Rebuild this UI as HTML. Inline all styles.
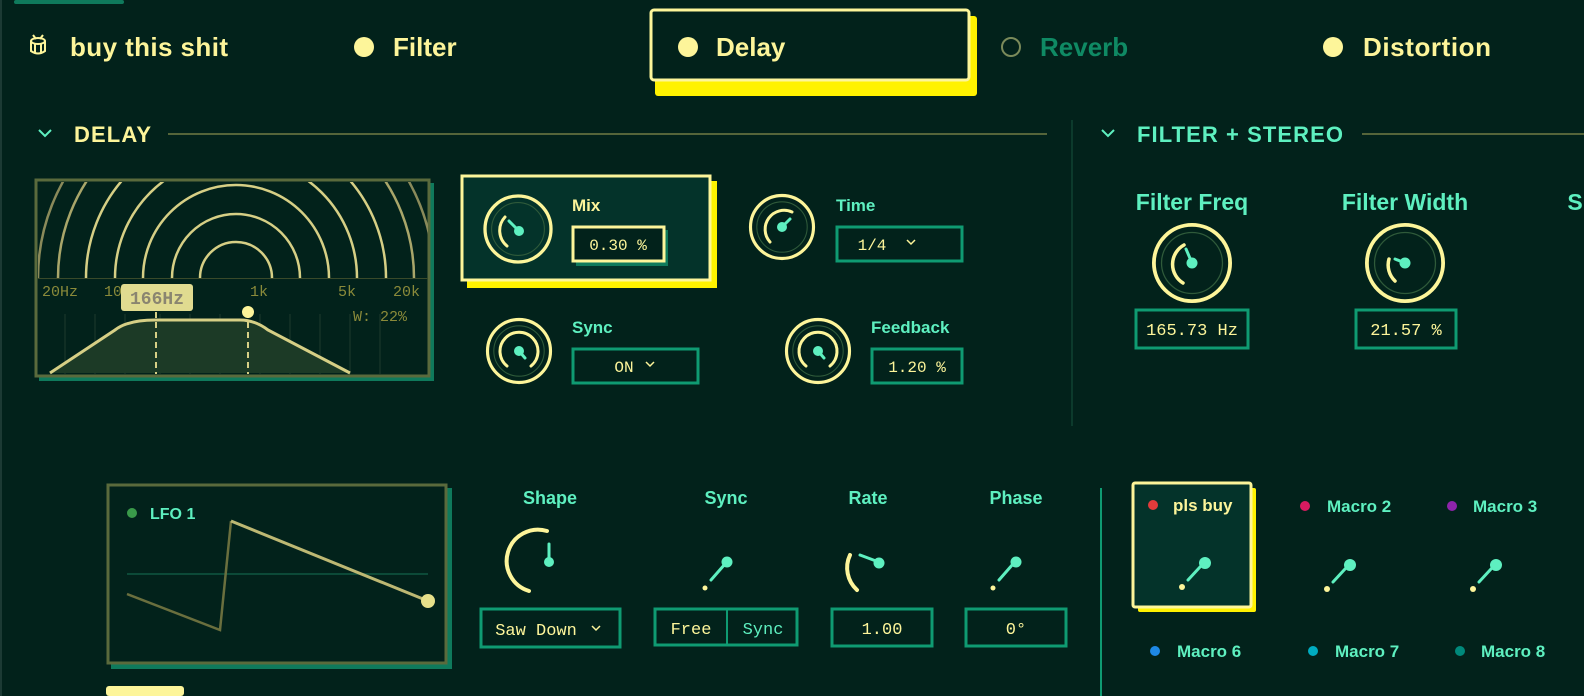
<!DOCTYPE html>
<html><head><meta charset="utf-8"><style>
html,body{margin:0;padding:0;background:#02221b;width:1584px;height:696px;overflow:hidden}
svg{display:block}
.s{font-family:"Liberation Sans",sans-serif;font-weight:bold}
.m{font-family:"Liberation Mono",monospace}
</style></head><body>
<svg width="1584" height="696" viewBox="0 0 1584 696" xmlns="http://www.w3.org/2000/svg">
<rect width="1584" height="696" fill="#02221b"/>
<rect x="0" y="0" width="2" height="696" fill="#1c3a34"/>
<rect x="14" y="0" width="110" height="4" rx="2" fill="#0f7a5c"/>
<g fill="none" stroke="#fdf59a" stroke-width="2">
<ellipse cx="38" cy="41" rx="7" ry="3"/><path d="M31 41v10q7 5 14 0V41M35 44v9M41 44v9M33 35l3 4M43 35l-3 4"/>
</g>
<g class="s" font-size="26" fill="#fdf59a">
<text x="70" y="56" textLength="158">buy this shit</text>
<circle cx="364" cy="47" r="10"/><text x="393" y="56">Filter</text>
<rect x="655" y="16" width="322" height="80" rx="3" fill="#fff200"/>
<rect x="651" y="10" width="318" height="70" rx="3" fill="#02221b" stroke="#fdf59a" stroke-width="3"/>
<circle cx="688" cy="47" r="10"/><text x="716" y="56">Delay</text>
<circle cx="1011" cy="47" r="9" fill="none" stroke="#7a8a5a" stroke-width="2"/><text x="1040" y="56" fill="#0f8a64">Reverb</text>
<circle cx="1333" cy="47" r="10"/><text x="1363" y="56" textLength="128">Distortion</text>
</g>
<path d="M39 130l6 6 6-6" fill="none" stroke="#5ef0c0" stroke-width="2"/>
<text x="74" y="142" class="s" font-size="22" fill="#fdf59a" textLength="77">DELAY</text>
<rect x="168" y="133" width="879" height="2" fill="#55653a"/>
<rect x="1071" y="120" width="2" height="306" fill="#0c3a2c"/>
<path d="M1102 130l6 6 6-6" fill="none" stroke="#5ef0c0" stroke-width="2"/>
<text x="1137" y="142" class="s" font-size="22" fill="#5ef0c0" textLength="206">FILTER + STEREO</text>
<rect x="1362" y="133" width="222" height="2" fill="#55653a"/>
<rect x="39" y="183" width="395" height="198" fill="#0f7a5c"/>
<rect x="36" y="180" width="393" height="196" fill="#02221b" stroke="#5a6a3c" stroke-width="3"/>
<clipPath id="c1"><rect x="38" y="182" width="390" height="96"/></clipPath>
<g clip-path="url(#c1)" fill="none" stroke="#d6cf85" stroke-width="2.5">
<circle cx="236" cy="278" r="36"/><circle cx="236" cy="278" r="64"/><circle cx="236" cy="278" r="93"/><circle cx="236" cy="278" r="121"/><circle cx="236" cy="278" r="150"/><circle cx="236" cy="278" r="178" stroke="#a9a66a"/><circle cx="236" cy="278" r="198" stroke="#8a8a5a"/>
</g>
<rect x="38" y="278" width="390" height="1" fill="#3a4a2a"/>
<g stroke="#1f3a2c" stroke-width="1"><path d="M65 314v60M95 314v60M125 314v60M160 314v60M190 314v60M220 314v60M260 314v60M290 314v60M320 314v60M350 314v60M380 314v60"/></g>
<path d="M50 373L115 330Q128 320 155 320L240 320Q255 320 268 330L350 373Z" fill="#1c3a26"/>
<path d="M50 373L115 330Q128 320 155 320L240 320Q255 320 268 330L350 373" fill="none" stroke="#d6cf85" stroke-width="3"/>
<path d="M156 312v62M248 312v62" stroke="#d6cf85" stroke-width="2" stroke-dasharray="6 4"/>
<circle cx="248" cy="312" r="6" fill="#fdf59a"/>
<g class="m" font-size="15" fill="#8a8a3a"><text x="42" y="296">20Hz</text><text x="104" y="296">10</text><text x="250" y="296">1k</text><text x="338" y="296">5k</text><text x="393" y="296">20k</text><text x="353" y="321">W: 22%</text></g>
<rect x="121" y="284" width="72" height="27" rx="3" fill="#e0db90"/>
<text x="157" y="304" text-anchor="middle" class="m" font-size="18" font-weight="bold" fill="#8a8570">166Hz</text>
<rect x="467" y="181" width="250" height="107" fill="#fff200"/>
<rect x="462" y="176" width="248" height="104" fill="#04332a" stroke="#fdf59a" stroke-width="3"/>
<defs>
<g id="kn"><circle r="30" fill="none" stroke="#fdf59a" stroke-width="3"/><circle r="24" fill="none" stroke="#2f5a3a" stroke-width="1"/></g>
</defs>
<g transform="translate(518,229)"><use href="#kn" transform="scale(1.1)"/><path d="M-11 17A20 20 0 0 1-13-12" fill="none" stroke="#fdf59a" stroke-width="3" stroke-linecap="round"/><path d="M-9-8L1 2" stroke="#5ef0c0" stroke-width="3" stroke-linecap="round"/><circle cx="1" cy="2" r="5" fill="#5ef0c0"/></g>
<g transform="translate(782,227)"><use href="#kn" transform="scale(1.05)"/><path d="M-12 15A19 19 0 0 1 10-15" fill="none" stroke="#fdf59a" stroke-width="3" stroke-linecap="round"/><path d="M0 0L8-8" stroke="#5ef0c0" stroke-width="3" stroke-linecap="round"/><circle r="5" fill="#5ef0c0"/></g>
<g transform="translate(519,351)"><use href="#kn" transform="scale(1.05)"/><path d="M-12 15A19 19 0 1 1 12 15" fill="none" stroke="#fdf59a" stroke-width="3" stroke-linecap="round"/><path d="M0 0L6 7" stroke="#5ef0c0" stroke-width="3" stroke-linecap="round"/><circle r="5" fill="#5ef0c0"/></g>
<g transform="translate(818,351)"><use href="#kn" transform="scale(1.05)"/><path d="M-12 15A19 19 0 1 1 12 15" fill="none" stroke="#fdf59a" stroke-width="3" stroke-linecap="round"/><path d="M0 0L6 7" stroke="#5ef0c0" stroke-width="3" stroke-linecap="round"/><circle r="5" fill="#5ef0c0"/></g>
<g class="s" font-size="17"><text x="572" y="211" fill="#fdf59a">Mix</text><text x="836" y="211" fill="#5ef0c0">Time</text><text x="572" y="333" fill="#5ef0c0">Sync</text><text x="871" y="333" fill="#5ef0c0">Feedback</text></g>
<rect x="576" y="230" width="92" height="36" fill="#0f7a5c"/>
<rect x="573" y="227" width="91" height="34" fill="#02221b" stroke="#fdf59a" stroke-width="3"/>
<g fill="#02221b" stroke="#0f9b72" stroke-width="3"><rect x="837" y="227" width="125" height="34"/><rect x="573" y="349" width="125" height="34"/><rect x="872" y="349" width="90" height="34"/><rect x="1136" y="310" width="112" height="38"/><rect x="1356" y="310" width="100" height="38"/></g>
<g class="m" font-size="16" fill="#fdf59a" text-anchor="middle"><text x="618" y="250">0.30 %</text><text x="872" y="250">1/4</text><text x="624" y="372">ON</text><text x="917" y="372">1.20 %</text><text x="1192" y="335" font-size="17">165.73 Hz</text><text x="1406" y="335" font-size="17">21.57 %</text></g>
<path d="M907 240l4 4 4-4M646 362l4 4 4-4" fill="none" stroke="#fdf59a" stroke-width="1.5"/>
<g class="s" font-size="23" fill="#5ef0c0" text-anchor="middle"><text x="1192" y="210">Filter Freq</text><text x="1405" y="210">Filter Width</text><text x="1575" y="210">S</text></g>
<g transform="translate(1192,263)"><use href="#kn" transform="scale(1.27)"/><path d="M-9 20A22 22 0 0 1-8-18" fill="none" stroke="#fdf59a" stroke-width="3.5" stroke-linecap="round"/><path d="M-6-14L0 0" stroke="#5ef0c0" stroke-width="3" stroke-linecap="round"/><circle r="5.5" fill="#5ef0c0"/></g>
<g transform="translate(1405,263)"><use href="#kn" transform="scale(1.27)"/><path d="M-10 18A22 22 0 0 1-16-4" fill="none" stroke="#fdf59a" stroke-width="3.5" stroke-linecap="round"/><path d="M-10-4L0 0" stroke="#5ef0c0" stroke-width="3" stroke-linecap="round"/><circle r="5.5" fill="#5ef0c0"/></g>
<rect x="111" y="488" width="341" height="181" fill="#0f7a5c"/>
<rect x="108" y="485" width="338" height="178" fill="#02221b" stroke="#5a6a3c" stroke-width="3"/>
<circle cx="132" cy="513" r="5" fill="#3a9a4a"/>
<text x="150" y="519" class="s" font-size="16" fill="#5ef0c0">LFO 1</text>
<rect x="127" y="573" width="301" height="2" fill="#0c4a38"/>
<path d="M127 594L220 630L231 521" fill="none" stroke="#6a6f3e" stroke-width="2.5"/>
<path d="M231 521L428 601" fill="none" stroke="#bdb873" stroke-width="3"/>
<circle cx="428" cy="601" r="7" fill="#e6e08a"/>
<g class="s" font-size="18" fill="#5ef0c0" text-anchor="middle"><text x="550" y="504">Shape</text><text x="726" y="504">Sync</text><text x="868" y="504">Rate</text><text x="1016" y="504">Phase</text></g>
<path d="M547 531A30 30 0 0 0 529 591" fill="none" stroke="#fdf59a" stroke-width="4" stroke-linecap="round"/>
<path d="M549 544V560" stroke="#5ef0c0" stroke-width="3" stroke-linecap="round"/><circle cx="549" cy="562" r="5" fill="#5ef0c0"/>
<path d="M711 580L725 564" stroke="#5ef0c0" stroke-width="3" stroke-linecap="round"/><circle cx="727" cy="562" r="5.5" fill="#5ef0c0"/><circle cx="705" cy="588" r="2.5" fill="#fdf59a"/>
<path d="M850 555A30 30 0 0 0 857 590" fill="none" stroke="#fdf59a" stroke-width="4" stroke-linecap="round"/>
<path d="M860 555L876 561" stroke="#5ef0c0" stroke-width="3" stroke-linecap="round"/><circle cx="879" cy="563" r="5.5" fill="#5ef0c0"/>
<path d="M999 580L1013 564" stroke="#5ef0c0" stroke-width="3" stroke-linecap="round"/><circle cx="1016" cy="562" r="5.5" fill="#5ef0c0"/><circle cx="993" cy="588" r="2.5" fill="#fdf59a"/>
<g fill="#02221b" stroke="#0f9b72" stroke-width="3"><rect x="481" y="609" width="139" height="38"/><rect x="655" y="609" width="142" height="36"/><rect x="832" y="609" width="100" height="37"/><rect x="966" y="609" width="100" height="37"/></g>
<rect x="726" y="610" width="2" height="34" fill="#0f9b72"/>
<g class="m" font-size="17" fill="#fdf59a" text-anchor="middle"><text x="536" y="635">Saw Down</text><text x="691" y="634">Free</text><text x="763" y="634" fill="#5ef0c0">Sync</text><text x="882" y="634">1.00</text><text x="1016" y="634">0°</text></g>
<path d="M592 626l4 4 4-4" fill="none" stroke="#fdf59a" stroke-width="1.5"/>
<rect x="106" y="686" width="78" height="10" rx="3" fill="#fdf59a"/>
<rect x="1100" y="488" width="2" height="208" fill="#0f9b72"/>
<rect x="1138" y="488" width="118" height="124" rx="2" fill="#fff200"/>
<rect x="1133" y="483" width="118" height="124" rx="2" fill="#04332a" stroke="#fdf59a" stroke-width="3"/>
<g class="s" font-size="17">
<circle cx="1153" cy="505" r="5" fill="#e23b3b"/><text x="1173" y="511" fill="#fdf59a">pls buy</text>
<circle cx="1305" cy="506" r="5" fill="#d81b60"/><text x="1327" y="512" fill="#5ef0c0">Macro 2</text>
<circle cx="1452" cy="506" r="5" fill="#8e24aa"/><text x="1473" y="512" fill="#5ef0c0">Macro 3</text>
<circle cx="1155" cy="651" r="5" fill="#1e88e5"/><text x="1177" y="657" fill="#5ef0c0">Macro 6</text>
<circle cx="1313" cy="651" r="5" fill="#00acc1"/><text x="1335" y="657" fill="#5ef0c0">Macro 7</text>
<circle cx="1460" cy="651" r="5" fill="#00897b"/><text x="1481" y="657" fill="#5ef0c0">Macro 8</text>
</g>
<g stroke="#5ef0c0" stroke-width="3" stroke-linecap="round"><path d="M1188 580L1200 567"/><path d="M1333 582L1345 569"/><path d="M1479 582L1491 569"/></g>
<g fill="#5ef0c0"><circle cx="1205" cy="563" r="6"/><circle cx="1350" cy="565" r="6"/><circle cx="1496" cy="565" r="6"/></g>
<g fill="#fdf59a"><circle cx="1182" cy="587" r="3"/><circle cx="1327" cy="589" r="3"/><circle cx="1473" cy="589" r="3"/></g>
</svg>
</body></html>
